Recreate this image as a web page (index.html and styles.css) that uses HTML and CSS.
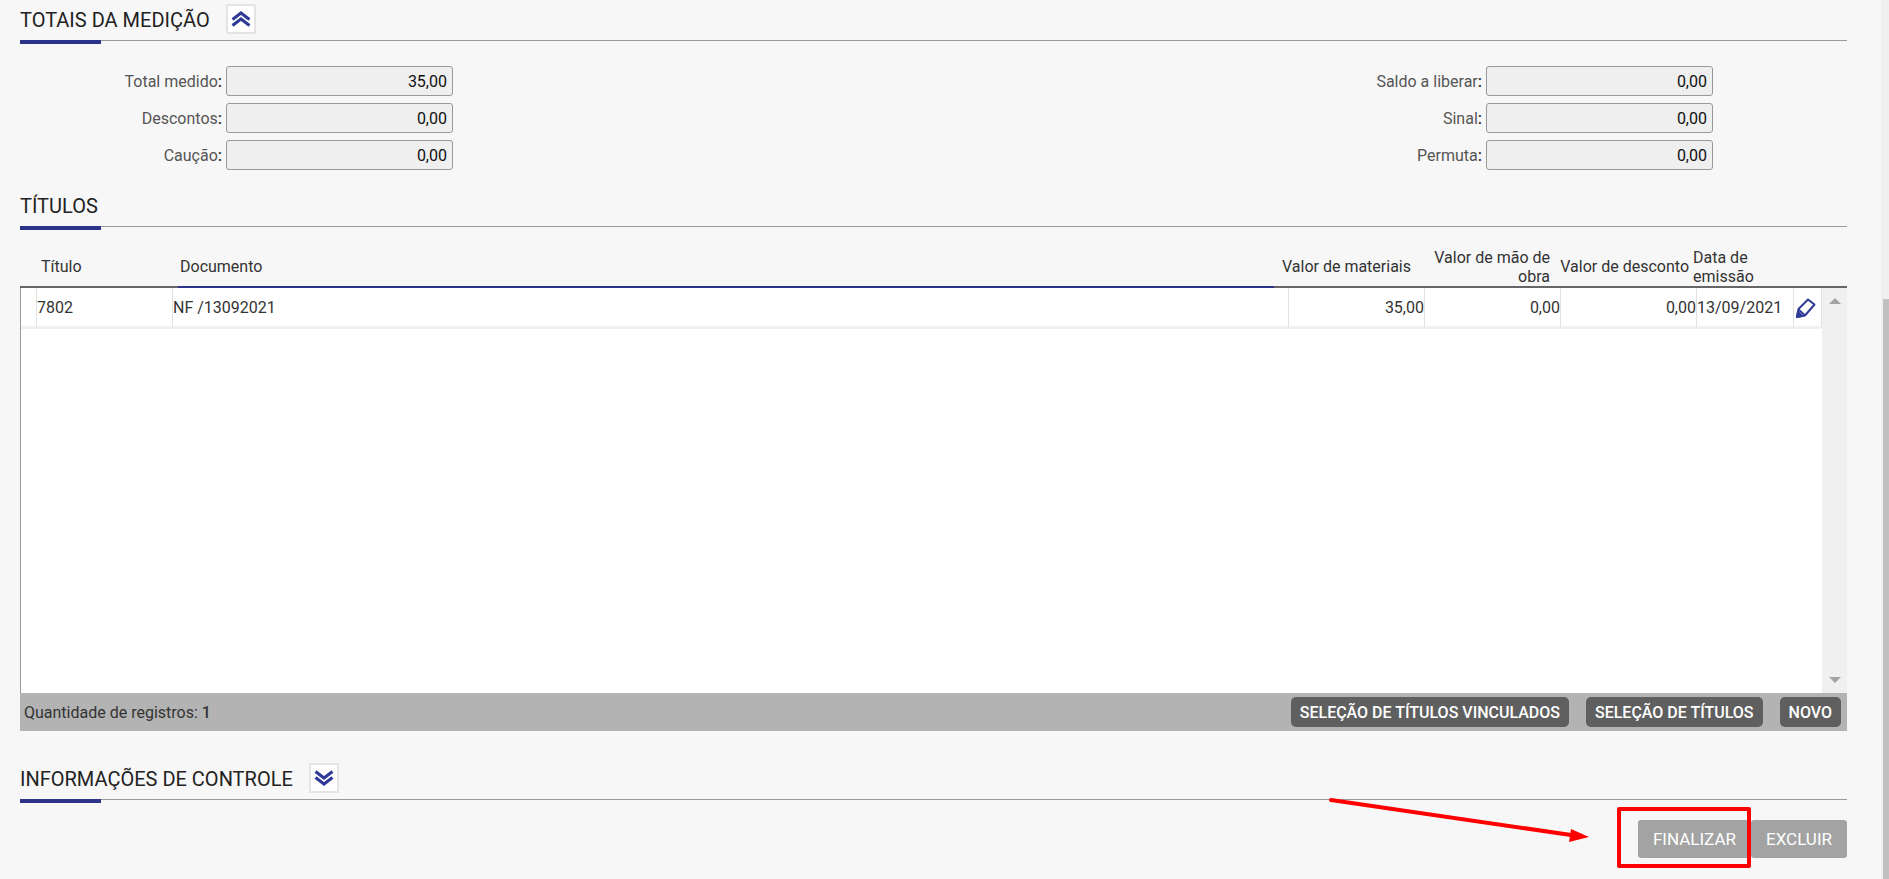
FILE: index.html
```html
<!DOCTYPE html>
<html lang="pt-BR">
<head>
    <meta charset="UTF-8">
    <meta name="viewport" content="width=device-width, initial-scale=1.0">
    <title>Medição</title>
    <link rel="stylesheet" href="styles.css">
</head>
<body>
    <main class="page">
        <section class="totals">
            <div class="section-title">
                <h2>TOTAIS DA MEDIÇÃO</h2>
                <button type="button" class="toggle" aria-label="Recolher">
                    <svg width="20" height="18" viewBox="0 0 20 18"><path d="M1.500 9.500 10 3l8.500 6.500M1.500 15.500 10 9l8.500 6.500"/></svg>
                </button>
            </div>
            <form class="fields">
                <div class="field-group">
                    <label for="totalMedido">Total medido<b>:</b></label>
                    <input type="text" id="totalMedido" value="35,00" readonly>
                    <label for="descontos">Descontos<b>:</b></label>
                    <input type="text" id="descontos" value="0,00" readonly>
                    <label for="caucao">Caução<b>:</b></label>
                    <input type="text" id="caucao" value="0,00" readonly>
                </div>
                <div class="field-group">
                    <label for="saldo">Saldo a liberar<b>:</b></label>
                    <input type="text" id="saldo" value="0,00" readonly>
                    <label for="sinal">Sinal<b>:</b></label>
                    <input type="text" id="sinal" value="0,00" readonly>
                    <label for="permuta">Permuta<b>:</b></label>
                    <input type="text" id="permuta" value="0,00" readonly>
                </div>
            </form>
        </section>

        <section class="titles">
            <div class="section-title">
                <h2>TÍTULOS</h2>
            </div>
            <table class="grid-head">
                <colgroup>
                    <col class="head-mark"><col class="head-num"><col>
                    <col class="head-value"><col class="head-value"><col class="head-value">
                    <col class="head-date"><col class="head-end">
                </colgroup>
                <thead>
                    <tr>
                        <th></th>
                        <th>Título</th>
                        <th class="sorted">Documento</th>
                        <th class="num">Valor de materiais</th>
                        <th class="num">Valor de mão de obra</th>
                        <th class="num">Valor de desconto</th>
                        <th>Data de emissão</th>
                        <th></th>
                    </tr>
                </thead>
            </table>
            <div class="grid-body">
                <div class="grid-rows">
                    <table class="rows">
                        <colgroup>
                            <col class="col-mark"><col class="col-value"><col>
                            <col class="col-value"><col class="col-value"><col class="col-value">
                            <col class="col-date"><col class="col-edit">
                        </colgroup>
                        <tbody>
                            <tr>
                                <td></td>
                                <td>7802</td>
                                <td>NF /13092021</td>
                                <td class="num">35,00</td>
                                <td class="num">0,00</td>
                                <td class="num">0,00</td>
                                <td>13/09/2021</td>
                                <td>
                                    <button type="button" class="edit" aria-label="Editar">
                                        <svg width="22" height="22" viewBox="0 0 22 22"><path d="M2 20l1.500-8L13 2.500l6.500 5L10 18.500zM3.500 12.500 9.500 18"/><path class="tip" d="M2 20l1-5 4 4z"/></svg>
                                    </button>
                                </td>
                            </tr>
                        </tbody>
                    </table>
                </div>
                <div class="grid-scroll">
                    <span class="arrow-up"></span>
                    <span class="arrow-down"></span>
                </div>
            </div>
            <div class="grid-footer">
                <span>Quantidade de registros: <b>1</b></span>
                <div class="footer-buttons">
                    <button type="button">SELEÇÃO DE TÍTULOS VINCULADOS</button>
                    <button type="button">SELEÇÃO DE TÍTULOS</button>
                    <button type="button">NOVO</button>
                </div>
            </div>
        </section>

        <section class="control">
            <div class="section-title">
                <h2>INFORMAÇÕES DE CONTROLE</h2>
                <button type="button" class="toggle" aria-label="Expandir">
                    <svg width="20" height="18" viewBox="0 0 20 18"><path d="M1.500 2.500 10 9l8.500-6.500M1.500 8.500 10 15l8.500-6.500"/></svg>
                </button>
            </div>
            <div class="actions">
                <div class="highlight">
                    <button type="button">FINALIZAR</button>
                    <span class="highlight-box"></span>
                    <svg class="highlight-arrow" width="268" height="50" viewBox="0 0 268 50">
                        <path class="line" d="M6 6 246 41"/>
                        <path class="head" d="M246 35 264 43 244 48z"/>
                    </svg>
                </div>
                <button type="button">EXCLUIR</button>
            </div>
        </section>
    </main>
    <div class="page-scroll"><div class="thumb"></div></div>
</body>
</html>
```

FILE: styles.css
```css
* {
    box-sizing: border-box;
}

body {
    margin: 0;
    min-height: 100vh;
    display: flex;
    background: #f7f7f7;
    color: #333;
    font-family: Roboto, Arial, sans-serif;
    font-size: 16px;
    line-height: 19px;
}

button, input {
    font: inherit;
}

button {
    border: none;
    cursor: pointer;
}

.page {
    flex: 1;
    min-width: 0;
    padding: 0 34px 0 20px;
}

/* section titles */
.section-title {
    position: relative;
    display: flex;
    align-items: center;
    gap: 16px;
    height: 41px;
    border-bottom: 1px solid #999;
}

.section-title::after {
    content: "";
    position: absolute;
    left: 0;
    top: 40px;
    width: 81px;
    height: 4px;
    background: #2b3488;
}

h2 {
    margin: 0;
    color: #222;
    font-size: 20px;
    font-weight: 400;
    line-height: 24px;
}

.toggle {
    display: flex;
    align-items: center;
    justify-content: center;
    width: 30px;
    height: 30px;
    margin-bottom: 2px;
    padding: 0;
    background: #fff;
    border: 2px solid #e4e4e4;
    border-radius: 2px;
}

.toggle path {
    fill: none;
    stroke: #2f3a96;
    stroke-width: 3;
}

/* totals */
.fields {
    display: flex;
    justify-content: space-between;
    padding: 25px 134px 16px 0;
}

.field-group {
    display: grid;
    grid-template-columns: 202px 227px;
    column-gap: 4px;
    row-gap: 7px;
    align-items: center;
}

.field-group label {
    color: #555;
    text-align: right;
}

.field-group b {
    color: #333;
    font-weight: 500;
}

.field-group input {
    width: 100%;
    height: 30px;
    padding: 0 5px;
    background: #efefef;
    border: 1px solid #999;
    border-radius: 3px;
    color: #111;
    text-align: right;
}

/* titles grid */
table {
    width: 100%;
    table-layout: fixed;
    border-collapse: separate;
    border-spacing: 0;
}

th {
    height: 61px;
    padding: 20px 2px 0;
    border-bottom: 2px solid #666;
    color: #333;
    font-weight: 400;
    text-align: left;
    vertical-align: middle;
}

th.sorted {
    border-bottom-color: #2b3488;
}

.num {
    text-align: right;
}

.head-mark { width: 19px; }
.head-num { width: 139px; }
.head-value { width: 139px; }
.head-date { width: 96px; }
.head-end { width: 60px; }

.grid-body {
    display: flex;
    height: 405px;
    background: #fff;
    border-left: 1px solid #999;
}

.grid-rows {
    flex: 1;
    min-width: 0;
}

.rows td {
    height: 41px;
    padding: 0;
    border-right: 1px solid #e2e2e2;
    border-bottom: 3px solid #f1f1f1;
}

.col-mark { width: 16px; }
.col-value { width: 136px; }
.col-date { width: 97px; }
.col-edit { width: 28px; }

.edit {
    display: block;
    padding: 2px 1px 0;
    background: none;
}

.edit svg {
    display: block;
}

.edit path {
    fill: none;
    stroke: #2f3a96;
    stroke-width: 2;
    stroke-linejoin: round;
}

.edit .tip {
    fill: #2f3a96;
}

.grid-scroll {
    display: flex;
    flex-direction: column;
    justify-content: space-between;
    align-items: center;
    width: 25px;
    padding: 10px 0;
    background: #f0f0f0;
}

.arrow-up, .arrow-down {
    border: 6px solid transparent;
}

.arrow-up {
    border-top: none;
    border-bottom-color: #a3a3a3;
}

.arrow-down {
    border-bottom: none;
    border-top-color: #a3a3a3;
}

.grid-footer {
    display: flex;
    align-items: center;
    justify-content: space-between;
    height: 38px;
    padding: 0 6px 0 4px;
    background: #b3b3b3;
}

.grid-footer b {
    font-weight: 500;
}

.footer-buttons {
    display: flex;
    gap: 17px;
}

.footer-buttons button {
    height: 30px;
    padding: 0 9px;
    background: #5f5f5f;
    border-radius: 5px;
    color: #fff;
    font-weight: 500;
}

/* control */
.control {
    padding-top: 28px;
}

.actions {
    display: flex;
    justify-content: flex-end;
    padding-top: 20px;
}

.actions button {
    height: 38px;
    padding: 0 15px;
    background: #a3a3a3;
    border-radius: 3px;
    color: #fff;
    font-size: 17px;
}

.highlight {
    position: relative;
}

.highlight-box {
    position: absolute;
    top: -13px;
    right: 0;
    bottom: -10px;
    left: -21px;
    border: 4px solid #f00;
    border-radius: 2px;
}

.highlight-arrow {
    position: absolute;
    top: -26px;
    right: 158px;
}

.highlight-arrow .line {
    stroke: #f00;
    stroke-width: 4;
    stroke-linecap: round;
}

.highlight-arrow .head {
    fill: #f00;
}

/* page scrollbar */
.page-scroll {
    width: 8px;
    padding: 299px 0 0 2px;
    background: #f0f0f0;
}

.page-scroll .thumb {
    height: 100%;
    background: #c1c1c1;
}
```
